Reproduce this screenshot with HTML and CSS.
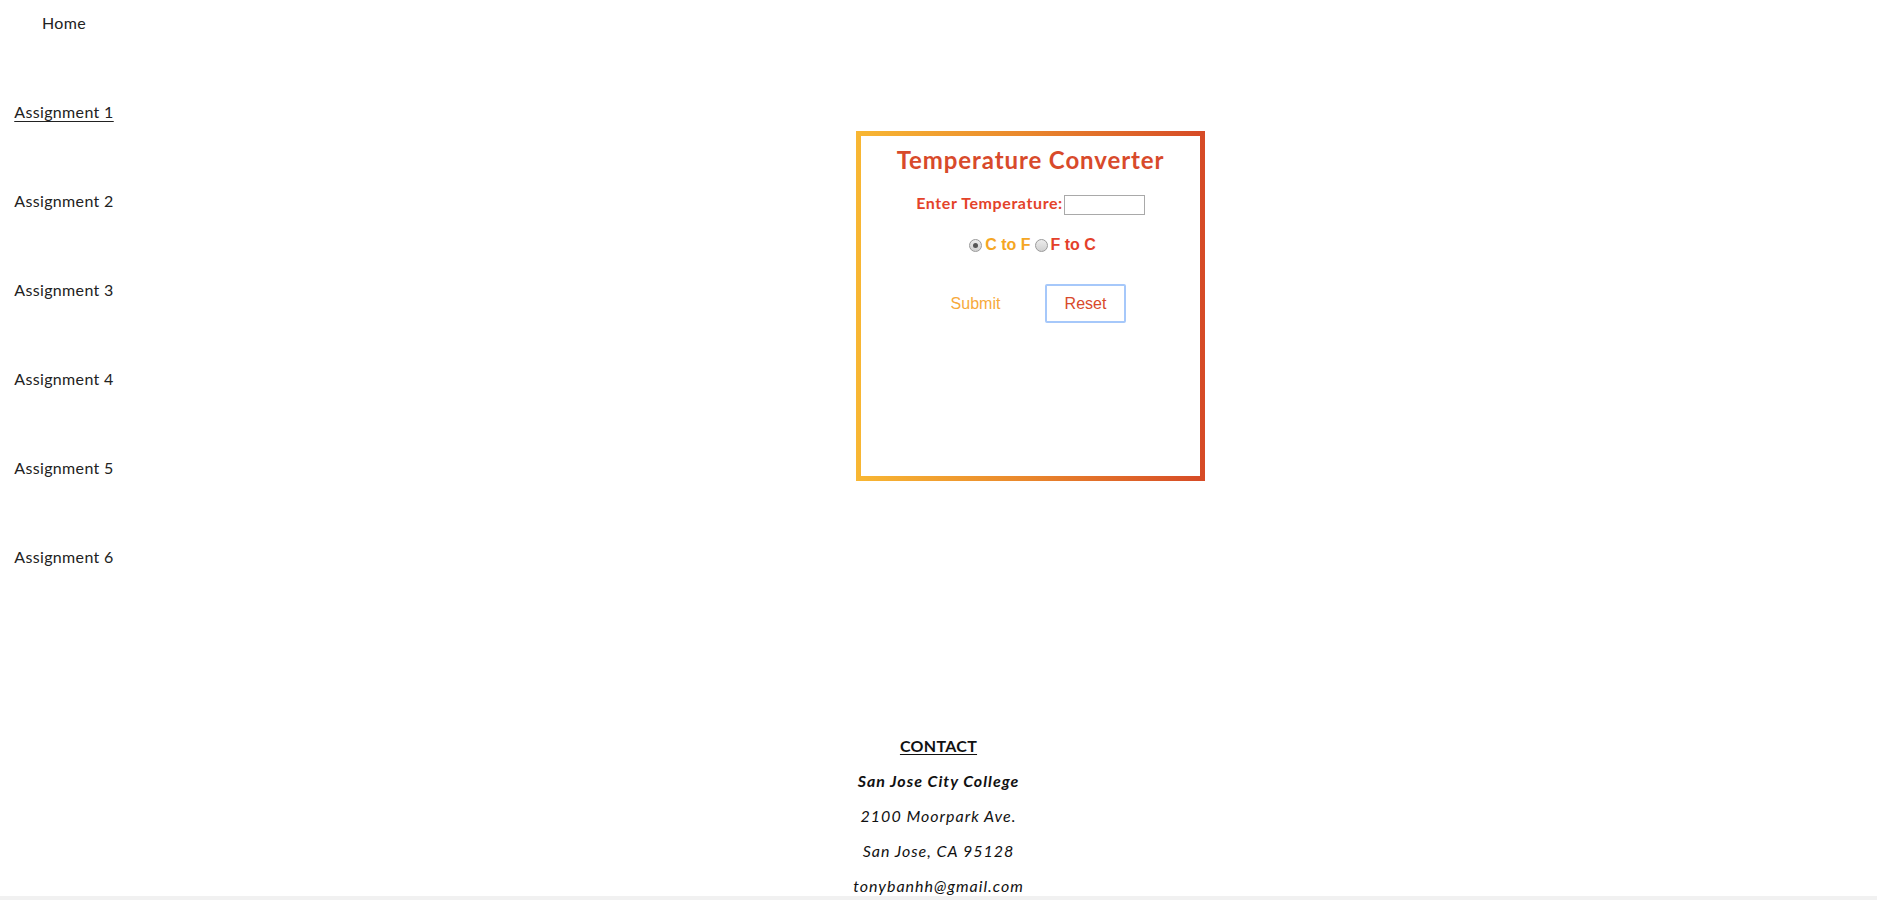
FILE: index.html
```html
<!DOCTYPE html>
<html lang="en">
<head>
<meta charset="utf-8">
<title>Temperature Converter</title>
<link rel="stylesheet" href="styles.css">
</head>
<body>
<div class="layout">
  <nav class="nav">
    <ul class="nav-list">
      <li class="nav-item"><a class="nav-link" href="#">Home</a></li>
      <li class="nav-item"><a class="nav-link current" href="#">Assignment 1</a></li>
      <li class="nav-item"><a class="nav-link" href="#">Assignment 2</a></li>
      <li class="nav-item"><a class="nav-link" href="#">Assignment 3</a></li>
      <li class="nav-item"><a class="nav-link" href="#">Assignment 4</a></li>
      <li class="nav-item"><a class="nav-link" href="#">Assignment 5</a></li>
      <li class="nav-item"><a class="nav-link" href="#">Assignment 6</a></li>
    </ul>
  </nav>
  <main class="main">
    <section class="converter">
      <h1 class="title">Temperature Converter</h1>
      <div class="row field-row">
        <label class="field-label" for="temp">Enter Temperature:</label><input class="field-input" id="temp" type="text">
      </div>
      <div class="row radio-row">
        <input class="radio" type="radio" name="mode" id="ctof" checked><label class="radio-label c2f" for="ctof">C to F</label>
        <input class="radio" type="radio" name="mode" id="ftoc"><label class="radio-label f2c" for="ftoc">F to C</label>
      </div>
      <div class="row button-row">
        <button class="btn btn-submit" type="button">Submit</button>
        <button class="btn btn-reset" type="button">Reset</button>
      </div>
    </section>
  </main>
</div>
<footer class="footer">
  <p class="contact-title">CONTACT</p>
  <p class="college">San Jose City College</p>
  <p class="addr">2100 Moorpark Ave.</p>
  <p class="addr">San Jose, CA 95128</p>
  <p class="addr">tonybanhh@gmail.com</p>
</footer>
<div class="bottom-bar"></div>
</body>
</html>
```

FILE: styles.css
```css
html, body {
  margin: 0;
  padding: 0;
  background: #ffffff;
}
body {
  font-family: Lato, "Open Sans", "Liberation Sans", sans-serif;
  color: #222222;
  font-size: 16px;
}
.layout {
  display: flex;
  align-items: flex-start;
}
.nav {
  width: 128px;
  flex: 0 0 128px;
}
.nav-list {
  list-style: none;
  margin: 0;
  padding: 0;
}
.nav-item {
  height: 89px;
  box-sizing: border-box;
  padding-top: 13px;
  text-align: center;
  line-height: 20px;
}
.nav-link {
  color: #222222;
  text-decoration: none;
  font-size: 16px;
  letter-spacing: 0.35px;
}
.nav-link.current {
  text-decoration: underline;
  text-underline-offset: 3px;
}
.main {
  flex: 1;
  display: flex;
  justify-content: center;
  padding-left: 56px;
  padding-top: 131px;
}
.converter {
  width: 349px;
  height: 350px;
  box-sizing: border-box;
  border: 5px solid transparent;
  background:
    linear-gradient(#ffffff, #ffffff) padding-box,
    linear-gradient(90deg, #f8b733 0%, #e9862c 50%, #d64a26 100%) border-box;
  display: flex;
  flex-direction: column;
  align-items: center;
}
.title {
  margin: 10px 0 0;
  font-size: 24px;
  line-height: 28px;
  font-weight: 700;
  color: #d84a2b;
  letter-spacing: 0.9px;
}
.row {
  display: flex;
  align-items: center;
  justify-content: center;
}
.field-row {
  margin-top: 21px;
  height: 20px;
}
.field-label {
  font-weight: 700;
  font-size: 16px;
  color: #e4432a;
  line-height: 20px;
  letter-spacing: 0.6px;
  position: relative;
  top: -2px;
}
.field-input {
  width: 81px;
  height: 20px;
  box-sizing: border-box;
  border: 1px solid #a9a9a9;
  margin: 0 0 0 1px;
  padding: 0 2px;
  font-size: 13px;
}
.radio-row {
  margin-top: 20px;
  height: 20px;
  font-family: "Liberation Sans", Arial, sans-serif;
}
.radio {
  -webkit-appearance: none;
  appearance: none;
  width: 13px;
  height: 13px;
  margin: 0 3px 0 4px;
  border: 1px solid #9a9a9a;
  border-radius: 50%;
  box-sizing: border-box;
  background: linear-gradient(#ececec, #d0d0d0);
  position: relative;
}
.radio:checked::after {
  content: "";
  position: absolute;
  left: 3px;
  top: 3px;
  width: 5px;
  height: 5px;
  border-radius: 50%;
  background: #555555;
}
.radio-label {
  font-weight: 700;
  font-size: 16px;
  line-height: 20px;
}
.c2f {
  color: #f5a623;
}
.f2c {
  color: #e4402a;
}
.button-row {
  margin-top: 29px;
  gap: 29px;
}
.btn {
  width: 81px;
  height: 39px;
  box-sizing: border-box;
  background: #ffffff;
  font-family: "Liberation Sans", Arial, sans-serif;
  font-size: 16px;
  border-radius: 2px;
  padding: 0;
}
.btn-submit {
  border: 2px solid transparent;
  color: #f7a93a;
}
.btn-reset {
  border: 2px solid #a6c8fa;
  color: #d84a2b;
}
.footer {
  margin-top: 113px;
  display: flex;
  flex-direction: column;
  align-items: center;
  gap: 16px;
  padding-bottom: 1px;
  color: #111111;
}
.footer p {
  margin: 0;
  line-height: 19px;
  font-size: 16px;
  letter-spacing: 1px;
}
.contact-title {
  font-weight: 700;
  text-decoration: underline;
  text-underline-offset: 2px;
}
.footer .contact-title {
  letter-spacing: 0.3px;
}
.college {
  font-weight: 700;
  font-style: italic;
}
.addr {
  font-style: italic;
}
.bottom-bar {
  height: 12px;
  background: #f1f1f1;
}
```
